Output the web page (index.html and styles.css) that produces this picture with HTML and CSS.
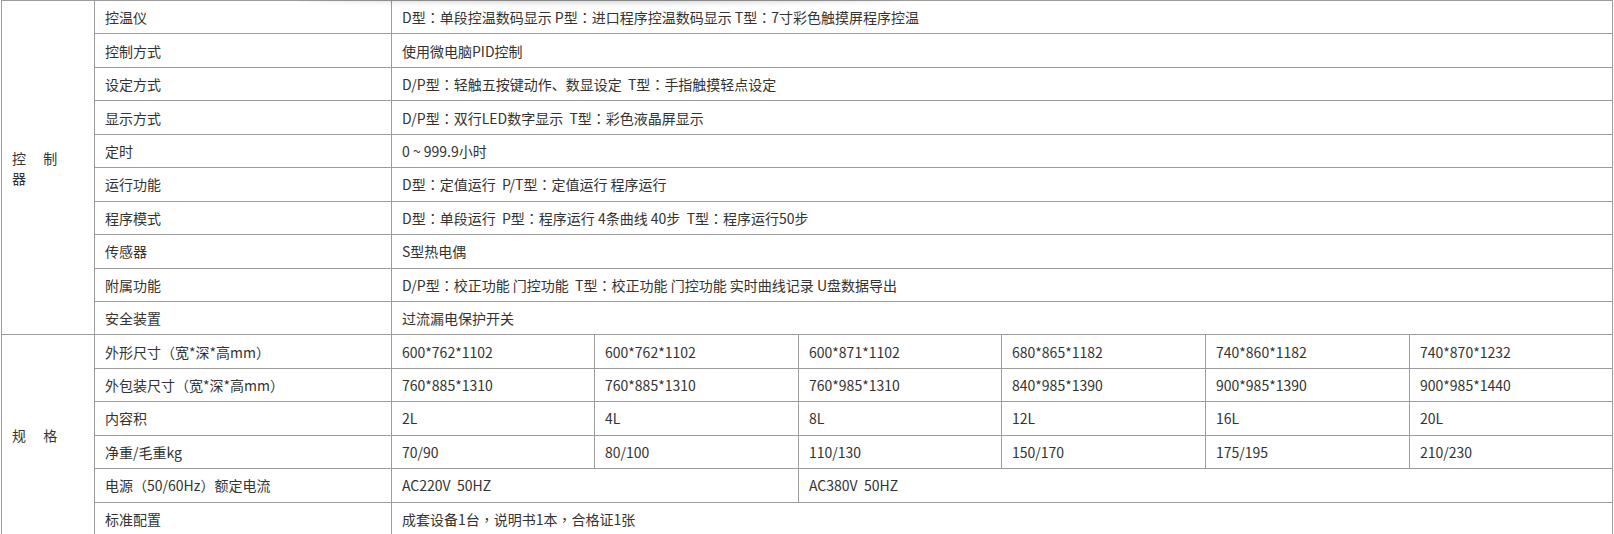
FILE: index.html
```html
<!DOCTYPE html>
<html lang="zh-CN">
<head>
    <meta charset="UTF-8">
    <meta name="viewport" content="width=device-width, initial-scale=1.0">
    <title>技术参数</title>
    <link rel="stylesheet" href="styles.css">
</head>
<body>
<div class="wrap">
    <div class="topShadow"></div>
    <table class="spec">
        <colgroup>
            <col class="c-group">
            <col class="c-name">
            <col class="c-a"><col class="c-b"><col class="c-a"><col class="c-b"><col class="c-b"><col class="c-a">
        </colgroup>
        <tr>
            <td class="group" rowspan="10">控 制 器</td>
            <td>控温仪</td>
            <td colspan="6">D型<i>：</i>单段控温数码显示 P型<i>：</i>进口程序控温数码显示 T型<i>：</i>7寸彩色触摸屏程序控温</td>
        </tr>
        <tr><td>控制方式</td><td colspan="6">使用微电脑PID控制</td></tr>
        <tr><td>设定方式</td><td colspan="6">D/P型<i>：</i>轻触五按键动作、数显设定&nbsp; T型<i>：</i>手指触摸轻点设定</td></tr>
        <tr><td>显示方式</td><td colspan="6">D/P型<i>：</i>双行LED数字显示&nbsp; T型<i>：</i>彩色液晶屏显示</td></tr>
        <tr><td>定时</td><td colspan="6">0 ~ 999.9小时</td></tr>
        <tr><td>运行功能</td><td colspan="6">D型<i>：</i>定值运行&nbsp; P/T型<i>：</i>定值运行 程序运行</td></tr>
        <tr><td>程序模式</td><td colspan="6">D型<i>：</i>单段运行&nbsp; P型<i>：</i>程序运行 4条曲线 40步&nbsp; T型<i>：</i>程序运行50步</td></tr>
        <tr><td>传感器</td><td colspan="6">S型热电偶</td></tr>
        <tr><td>附属功能</td><td colspan="6">D/P型<i>：</i>校正功能 门控功能&nbsp; T型<i>：</i>校正功能 门控功能 实时曲线记录 U盘数据导出</td></tr>
        <tr><td>安全装置</td><td colspan="6">过流漏电保护开关</td></tr>
        <tr>
            <td class="group" rowspan="6">规 格</td>
            <td>外形尺寸<i>（</i>宽*深*高mm<i>）</i></td>
            <td>600*762*1102</td><td>600*762*1102</td><td>600*871*1102</td><td>680*865*1182</td><td>740*860*1182</td><td>740*870*1232</td>
        </tr>
        <tr>
            <td>外包装尺寸<i>（</i>宽*深*高mm<i>）</i></td>
            <td>760*885*1310</td><td>760*885*1310</td><td>760*985*1310</td><td>840*985*1390</td><td>900*985*1390</td><td>900*985*1440</td>
        </tr>
        <tr>
            <td>内容积</td>
            <td>2L</td><td>4L</td><td>8L</td><td>12L</td><td>16L</td><td>20L</td>
        </tr>
        <tr>
            <td>净重/毛重kg</td>
            <td>70/90</td><td>80/100</td><td>110/130</td><td>150/170</td><td>175/195</td><td>210/230</td>
        </tr>
        <tr>
            <td>电源<i>（</i>50/60Hz<i>）</i>额定电流</td>
            <td colspan="2">AC220V&nbsp; 50HZ</td><td colspan="4">AC380V&nbsp; 50HZ</td>
        </tr>
        <tr><td>标准配置</td><td colspan="6">成套设备1台<i>，</i>说明书1本<i>，</i>合格证1张</td></tr>
    </table>
</div>
</body>
</html>
```

FILE: styles.css
```css
html {
    background: #fff;
}
body {
    margin: 0;
    font-family: "Noto Sans CJK SC", "Noto Sans", sans-serif;
    font-size: 14px;
    color: #333;
}
.wrap {
    position: relative;
    padding-left: 1px;
}
/* shadow of the bar above, bleeding onto the table */
.topShadow {
    position: absolute;
    top: -12px;
    left: 300px;
    width: 600px;
    height: 12px;
    box-shadow: 0 2px 7px rgba(0, 0, 0, .2);
    border-radius: 50%;
}
.spec {
    table-layout: fixed;
    width: 1612px;
    border-collapse: collapse;
}
.spec col.c-group { width: 93px; }
.spec col.c-name { width: 297px; }
.spec col.c-a { width: 203px; }
.spec col.c-b { width: 204px; }
.spec tr {
    height: 33.45px;
}
.spec td {
    border: 1px solid #9c9c9c;
    padding: 0 10px;
    line-height: 20px;
    white-space: nowrap;
    vertical-align: middle;
}
.spec td.group {
    white-space: normal;
    word-spacing: 14px;
}
/* full-width punctuation, centred in its box */
.spec i {
    font-style: normal;
    font-family: "Noto Sans CJK TC", sans-serif;
    font-feature-settings: "locl" 0;
}
```
